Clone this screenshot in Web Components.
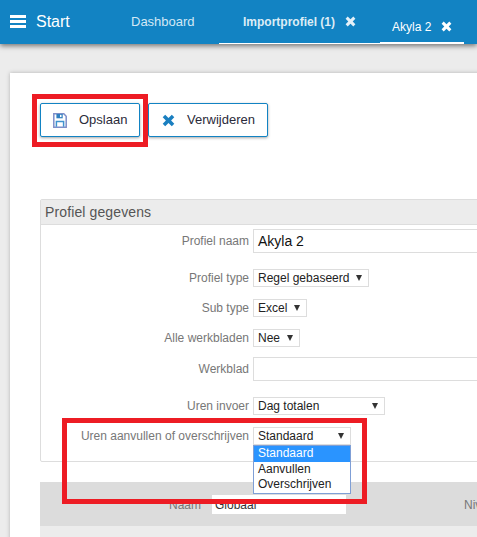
<!DOCTYPE html>
<html>
<head>
<meta charset="utf-8">
<title>Profiel</title>
<style>
html, body { margin: 0; height: 537px; overflow: hidden; background: #ececec; font-family: "Liberation Sans", Arial, sans-serif; }
</style>
</head>
<body>
<app-page>
	<top-bar slot="bar"></top-bar>
	<tool-button icon="save">Opslaan</tool-button>
	<tool-button icon="x">Verwijderen</tool-button>
	<profile-panel title="Profiel gegevens">
		<form-row label="Profiel naam" gap="16"><text-box value="Akyla 2"></text-box></form-row>
		<form-row label="Profiel type" gap="12"><drop-box width="116" value="Regel gebaseerd"></drop-box></form-row>
		<form-row label="Sub type" gap="12"><drop-box width="54" value="Excel"></drop-box></form-row>
		<form-row label="Alle werkbladen" gap="10"><drop-box width="47" value="Nee"></drop-box></form-row>
		<form-row label="Werkblad" gap="16"><text-box></text-box></form-row>
		<form-row label="Uren invoer" gap="12"><drop-box width="132" value="Dag totalen"></drop-box></form-row>
		<form-row label="Uren aanvullen of overschrijven" gap="16">
			<drop-box width="98" value="Standaard" options="Standaard,Aanvullen,Overschrijven"></drop-box>
		</form-row>
	</profile-panel>
	<level-section></level-section>
</app-page>
<script>
(function() {
	const closePath = `<path d="M2.700.6 5.500 3.300 8.300.6 10.400 2.700 7.700 5.500 10.400 8.300 8.300 10.400 5.500 7.700 2.700 10.400.6 8.300 3.300 5.500.6 2.700Z" fill="currentColor"/>`;
	const closeIcon = `<svg width="11" height="11" viewBox="0 0 11 11">${closePath}</svg>`;

	class AppPage extends HTMLElement {
		constructor() {
			super();
			this.attachShadow({mode: "open"}).innerHTML = `
				<style>
				:host { display: block; position: relative; height: 537px; overflow: hidden; }
				.card {
					margin: 29px -200px 0 10px;
					height: 500px;
					padding: 30px 0 0 30px;
					background: #fff;
					box-shadow: 0 0 4px rgba(0,0,0,.25);
				}
				.tools { display: flex; gap: 8px; }
				.content { width: 700px; margin-top: 62px; }
				.mark { position: absolute; box-sizing: border-box; border: 5px solid #ed1c24; }
				.mark.one { left: 32px; top: 94px; width: 116px; height: 53px; }
				.mark.two { left: 62px; top: 418px; width: 305px; height: 86px; }
				</style>
				<slot name="bar"></slot>
				<div class="card">
					<div class="tools"><slot name="tools"></slot></div>
					<div class="content"><slot></slot></div>
				</div>
				<div class="mark one"></div>
				<div class="mark two"></div>
			`;
		}
		connectedCallback() {
			this.querySelectorAll("tool-button").forEach(b => b.slot = "tools");
		}
	}

	class TopBar extends HTMLElement {
		constructor() {
			super();
			this.attachShadow({mode: "open"}).innerHTML = `
				<style>
				:host {
					display: flex; align-items: stretch; height: 44px;
					background: #1283c3; color: #fff;
					box-shadow: 0 2px 5px rgba(0,0,0,.5);
					position: relative;
				}
				.menu { display: flex; flex-direction: column; gap: 2px; width: 16px; margin: 15px 10px 0 10px; }
				.menu i { display: block; height: 3px; background: #fff; }
				.start { width: 95px; font-size: 16px; line-height: 43px; }
				.tab { box-sizing: border-box; height: 44px; line-height: 44px; white-space: nowrap; }
				.dash { width: 88px; font-size: 13px; color: #d3e8f5; }
				.imp { width: 161px; padding-left: 24px; border-bottom: 1px solid #fff; font-size: 12px; font-weight: bold; color: #dcecf6; }
				.ak { width: 84px; padding-left: 12px; border-bottom: 2px solid #fff; font-size: 12px; line-height: 55px; color: #fff; }
				.tab svg { margin-left: 10px; vertical-align: -1px; }
				.imp svg { color: #e4f0f8; }
				</style>
				<div class="menu"><i></i><i></i><i></i></div>
				<div class="start">Start</div>
				<div class="tab dash">Dashboard</div>
				<div class="tab imp">Importprofiel (1)${closeIcon}</div>
				<div class="tab ak">Akyla 2${closeIcon}</div>
			`;
		}
	}

	class ToolButton extends HTMLElement {
		constructor() {
			super();
			this.attachShadow({mode: "open"});
		}
		connectedCallback() {
			const save = `<svg width="14" height="15" viewBox="0 0 14 15" fill="none">
				<path d="M.8.8H10.800L13.200 3.200V14.200H.8Z" stroke="#7e8fc9" stroke-width="1.500"/>
				<path d="M3.400 1V5.300H9.700V1Z" fill="#2f7fbf"/>
				<rect x="7" y="1.800" width="1.500" height="2.300" fill="#fff"/>
				<path d="M3.400 13.800V8.600H10.600V13.800" stroke="#3f93cf" stroke-width="1.500"/>
			</svg>`;
			const x = `<svg width="13" height="13" viewBox="0 0 11 11" style="color:#1a7fc0">${closePath}</svg>`;
			const isSave = this.getAttribute("icon") === "save";
			this.shadowRoot.innerHTML = `
				<style>
				:host {
					display: flex; align-items: center; box-sizing: border-box; height: 34px;
					width: ${isSave ? 100 : 120}px;
					border: 1px solid #1283c3; border-radius: 2px; background: #fff;
					box-shadow: 0 1px 3px rgba(0,0,0,.35);
					font-size: 13px; color: #2b2b3a;
				}
				.ic { display: flex; justify-content: center; width: 38px; }
				.tx { margin-top: -1px; white-space: nowrap; }
				</style>
				<span class="ic">${isSave ? save : x}</span>
				<span class="tx"><slot></slot></span>
			`;
		}
	}

	class ProfilePanel extends HTMLElement {
		constructor() {
			super();
			this.attachShadow({mode: "open"});
		}
		connectedCallback() {
			this.shadowRoot.innerHTML = `
				<style>
				:host { display: block; box-sizing: border-box; height: 263px; border: 1px solid #ddd; border-radius: 2px; background: #fff; }
				.head { box-sizing: border-box; height: 25px; padding-left: 4px; background: #ececec; border-bottom: 1px solid #ddd; font-size: 14px; letter-spacing: .12px; line-height: 24px; color: #555; }
				.body { padding-top: 4px; }
				</style>
				<div class="head">${this.getAttribute("title")}</div>
				<div class="body"><slot></slot></div>
			`;
		}
	}

	class FormRow extends HTMLElement {
		constructor() {
			super();
			this.attachShadow({mode: "open"});
		}
		connectedCallback() {
			this.shadowRoot.innerHTML = `
				<style>
				:host { display: grid; grid-template-columns: 208px 1fr; column-gap: 4px; align-items: center; margin-bottom: ${this.getAttribute("gap")}px; }
				label { text-align: right; font-size: 12px; color: #777; white-space: nowrap; }
				</style>
				<label>${this.getAttribute("label")}</label>
				<div><slot></slot></div>
			`;
		}
	}

	class TextBox extends HTMLElement {
		constructor() {
			super();
			this.attachShadow({mode: "open"});
		}
		connectedCallback() {
			this.shadowRoot.innerHTML = `
				<style>
				:host { display: block; box-sizing: border-box; height: 24px; border: 1px solid #ddd; padding-left: 4px; font-size: 14px; line-height: 22px; color: #111; }
				</style>
				${this.getAttribute("value") || ""}
			`;
		}
	}

	class DropBox extends HTMLElement {
		constructor() {
			super();
			this.attachShadow({mode: "open"});
		}
		connectedCallback() {
			const options = (this.getAttribute("options") || "").split(",").filter(Boolean);
			const items = options.map((o, i) => `<div class="opt${i ? "" : " on"}">${o}</div>`).join("");
			this.shadowRoot.innerHTML = `
				<style>
				:host {
					display: flex; justify-content: space-between; align-items: center; position: relative;
					box-sizing: border-box; width: ${this.getAttribute("width")}px; height: 18px;
					border: 1px solid #ddd; padding: 0 6px 0 4px; background: #fff;
					font-size: 12px; color: #222; white-space: nowrap;
				}
				.arrow { width: 0; height: 0; border: 3.500px solid transparent; border-top: 6px solid #333; border-bottom: 0; }
				.menu {
					position: absolute; left: -1px; top: 17px; width: 98px; box-sizing: border-box; height: 49px;
					border: 1px solid #7f9fd6; background: #fff; z-index: 2;
				}
				.opt { height: 15.600px; line-height: 15.600px; padding-left: 4px; }
				.opt.on { background: #2a94ff; color: #fff; }
				</style>
				<span>${this.getAttribute("value")}</span>
				<span class="arrow"></span>
				${items ? `<div class="menu">${items}</div>` : ""}
			`;
		}
	}

	class LevelSection extends HTMLElement {
		constructor() {
			super();
			this.attachShadow({mode: "open"}).innerHTML = `
				<style>
				:host { display: block; margin-top: 20px; height: 80px; background: #ececec; border-radius: 2px 2px 0 0; font-size: 12px; color: #777; }
				.head { display: flex; align-items: flex-start; height: 44px; background: #dcdcdc; }
				.lbl { width: 161px; padding-top: 16px; text-align: right; }
				.box { box-sizing: border-box; width: 134px; height: 19px; margin: 13px 0 0 11px; padding-left: 3px; background: #fff; color: #333; line-height: 20px; }
				.niv { margin: 16px 0 0 118px; }
				</style>
				<div class="head">
					<span class="lbl">Naam</span>
					<span class="box">Globaal</span>
					<span class="niv">Niv</span>
				</div>
			`;
		}
	}

	customElements.define("app-page", AppPage);
	customElements.define("top-bar", TopBar);
	customElements.define("tool-button", ToolButton);
	customElements.define("profile-panel", ProfilePanel);
	customElements.define("form-row", FormRow);
	customElements.define("text-box", TextBox);
	customElements.define("drop-box", DropBox);
	customElements.define("level-section", LevelSection);
})();
</script>
</body>
</html>
